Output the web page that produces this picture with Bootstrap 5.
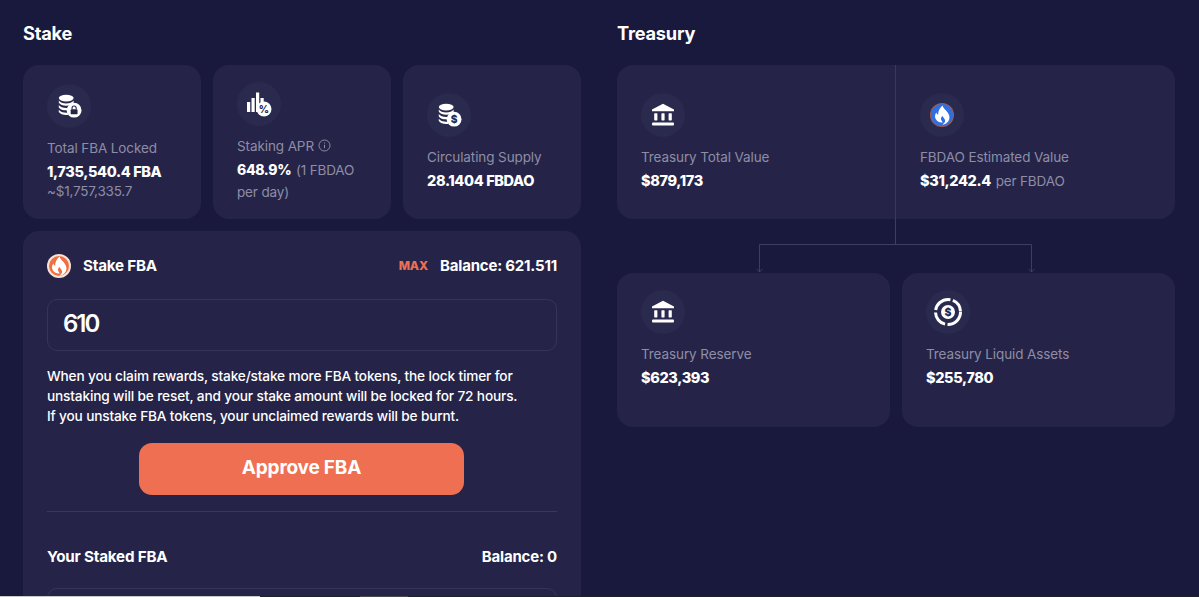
<!DOCTYPE html>
<html lang="en">
<head>
    <meta charset="UTF-8">
    <meta name="viewport" content="width=device-width, initial-scale=1.0">
    <title>Stake</title>
    <link href="https://cdn.jsdelivr.net/npm/bootstrap@5.3.0/dist/css/bootstrap.min.css" rel="stylesheet">
    <style>
        html, body { height: 100%; overflow: hidden; }
        body {
            background: #19183d;
            color: #fff;
            font-family: "Inter", "Liberation Sans", sans-serif;
            font-size: 13.5px;
        }
        .page-wrap { padding: 0 24px 0 23px; gap: 36px; }
        .side-col { width: 558px; flex: none; }
        .col-title { font-size: 18.2px; font-weight: 700; line-height: 22px; margin: 22px 0 21px; letter-spacing: -.2px; }
        .panel {
            background: #252448;
            border: 0;
            border-radius: 16px;
            color: #fff;
        }
        .stat-row { gap: 12px; }
        .stat-panel { height: 154px; padding: 0 24px; justify-content: center; }
        .stat-equal { flex: 1 1 0; min-width: 0; }
        .stat-low { justify-content: flex-start; padding-top: 17px; }
        .icon-disc {
            width: 44px; height: 44px; border-radius: 50%;
            background: #2a294e;
            margin-bottom: 10px;
        }
        .stat-label { color: #8e8da6; font-size: 13.5px; line-height: 20px; letter-spacing: -.1px; }
        .stat-value { font-size: 14.5px; font-weight: 800; line-height: 21px; margin-top: 3px; letter-spacing: -.35px; white-space: nowrap; }
        .stat-wrap { white-space: normal; font-size: 14px; }
        .stat-value .muted-part { font-weight: 400; letter-spacing: -.15px; font-size: 13.5px; margin-left: 2px; }
        .muted-part { color: #8e8da6; }
        .stat-note { color: #8e8da6; font-size: 13.5px; line-height: 18px; letter-spacing: -.2px; }
        .split-left { flex: 0 0 279px; border-right: 1px solid #3a3958; }
        .split-right { flex: 1 1 0; }
        .link-art { display: block; width: 558px; height: 54px; }
        .stake-panel { padding: 23px 24px 24px; margin-top: 12px; height: 500px; }
        .stake-head { font-size: 15.2px; font-weight: 700; line-height: 20px; letter-spacing: -.2px; }
        .head-balance { font-size: 15px; }
        .max-link { color: #ef6f52; font-weight: 800; font-size: 12px; letter-spacing: -.1px; }
        .amount-input.form-control {
            height: 52px;
            background: transparent;
            border: 1px solid #363557;
            border-radius: 10px;
            color: #fff;
            font-size: 24px;
            font-weight: 600;
            letter-spacing: -2px;
            padding: 0 15px 3px;
            box-shadow: none;
            margin-top: 21px;
        }
        .notice { font-size: 13.65px; line-height: 20px; font-weight: 500; margin: 15px 0 17px; letter-spacing: -.15px; white-space: nowrap; }
        .approve-btn.btn {
            display: block;
            width: 325px; height: 52px;
            margin: 0 0 0 92px;
            padding-bottom: 7px;
            background: #ef6f52;
            border: 0;
            border-radius: 13px;
            color: #fff;
            font-size: 19px;
            font-weight: 700;
            letter-spacing: -.2px;
        }
        .panel-rule { border: 0; border-top: 1px solid #3a3958; opacity: 1; margin: 16px 0 35px; }
        .flame-big { transform-origin: 12px 12px; transform: scale(1.12); }
        .taskbar-line { position: fixed; left: 0; right: 0; bottom: 0; height: 1px; background: #20202c; }
        .taskbar-line i { position: absolute; top: 0; height: 1px; display: block; }
        .bar-light { left: 0; width: 260px; background: #c9c9c9; }
        .bar-mid { left: 360px; width: 48px; background: #4a4a4a; }
    </style>
</head>
<body>
    <svg width="0" height="0" class="position-absolute">
        <symbol id="coins" viewBox="0 0 28 28">
            <ellipse cx="11" cy="5.500" rx="8" ry="3.600" fill="#fff"/>
            <path d="M3 8c1.400 2.200 4.500 3.200 8 3.200S17.600 10.200 19 8v2.500c-1.400 2.200-4.500 3.200-8 3.200s-6.600-1-8-3.200z" fill="#fff"/>
            <path d="M3 13c1.400 2.200 4.500 3.200 8 3.200h1.500l-.6 2.500H11c-3.500 0-6.600-1-8-3.200z" fill="#fff"/>
            <path d="M3 18c1.400 2.200 4.500 3.200 8 3.200h1.500l.8 2.500H11c-3.500 0-6.600-1-8-3.200z" fill="#fff"/>
            <circle cx="19.500" cy="18.500" r="8" fill="#fff"/>
        </symbol>
        <symbol id="bank" viewBox="0 0 24 24">
            <path d="M12 .8 23 6.500v1.800H1V6.500z" fill="#fff"/>
            <rect x="3.200" y="10.200" width="3.200" height="7.200" rx=".6" fill="#fff"/>
            <rect x="10.400" y="10.200" width="3.200" height="7.200" rx=".6" fill="#fff"/>
            <rect x="17.600" y="10.200" width="3.200" height="7.200" rx=".6" fill="#fff"/>
            <rect x="1" y="19.400" width="22" height="3" rx="1" fill="#fff"/>
        </symbol>
        <symbol id="flame" viewBox="0 0 24 24">
            <path d="M12.500 3.500c.6 2.300 2 3.300 3.500 5 1.800 2 2.900 4 2.600 6.300-.4 3-3 5.500-6.300 5.700 1.800-1 2.700-2.300 2.400-3.800-.2-1.300-1.300-2.300-2.300-3.800-.9 1-1.500 1.800-1.300 3 .2 1 .9 1.800 1.600 2.600-2 .6-4.500-.3-5.900-2.200-1.500-2.100-1.300-4.600.1-6.600.3 1 .9 1.700 1.700 2.100-.3-3.200 1.500-6.300 3.900-8.300z" fill="#fff"/>
        </symbol>
    </svg>

    <div class="page-wrap d-flex">
        <div class="side-col">
            <div class="col-title">Stake</div>
            <div class="d-flex stat-row">
                <div class="panel stat-panel stat-equal d-flex flex-column">
                    <div class="icon-disc d-flex align-items-center justify-content-center">
                        <svg width="26" height="26" viewBox="0 0 28 28">
                            <use href="#coins"/>
                            <rect x="15.800" y="17.500" width="7.400" height="5.500" rx="1" fill="#252448"/>
                            <path d="M17.300 17.500v-1.300a2.200 2.200 0 0 1 4.400 0v1.300" fill="none" stroke="#252448" stroke-width="1.200"/>
                        </svg>
                    </div>
                    <div class="stat-label">Total FBA Locked</div>
                    <div class="stat-value">1,735,540.4 FBA</div>
                    <div class="stat-note">~$1,757,335.7</div>
                </div>
                <div class="panel stat-panel stat-equal d-flex flex-column">
                    <div class="icon-disc d-flex align-items-center justify-content-center">
                        <svg width="26" height="26" viewBox="0 0 26 26">
                            <rect x="1" y="11" width="3.200" height="10" fill="#fff"/>
                            <rect x="5.500" y="7" width="3.200" height="14" fill="#fff"/>
                            <rect x="10" y="1.500" width="3.200" height="19.500" fill="#fff"/>
                            <rect x="14.500" y="7" width="3.200" height="8" fill="#fff"/>
                            <circle cx="18" cy="18" r="7.500" fill="#fff"/>
                            <text x="18" y="21.600" text-anchor="middle" font-size="10" font-weight="800" fill="#252448" font-family="Inter, sans-serif">%</text>
                        </svg>
                    </div>
                    <div class="stat-label d-flex align-items-center gap-1">Staking APR
                        <svg width="13" height="13" viewBox="0 0 13 13" fill="none"><circle cx="6.500" cy="6.500" r="5.500" stroke="#8e8da6"/><path d="M6.500 5.800v3.400M6.500 3.600v1" stroke="#8e8da6"/></svg>
                    </div>
                    <div class="stat-value stat-wrap">648.9% <span class="muted-part">(1 FBDAO per day)</span></div>
                </div>
                <div class="panel stat-panel stat-equal d-flex flex-column">
                    <div class="icon-disc d-flex align-items-center justify-content-center">
                        <svg width="26" height="26" viewBox="0 0 28 28">
                            <use href="#coins"/>
                            <text x="19.500" y="22.500" text-anchor="middle" font-size="11" font-weight="800" fill="#252448" font-family="Inter, sans-serif">$</text>
                        </svg>
                    </div>
                    <div class="stat-label">Circulating Supply</div>
                    <div class="stat-value">28.1404 FBDAO</div>
                </div>
            </div>

            <div class="panel stake-panel">
                <div class="stake-head d-flex align-items-center justify-content-between">
                    <div class="d-flex align-items-center">
                        <svg width="24" height="24" viewBox="0 0 24 24" class="me-2">
                            <circle cx="12" cy="12" r="12" fill="#f6e3d8"/>
                            <circle cx="12" cy="12" r="10" fill="#ef6f3f"/>
                            <use href="#flame" class="flame-big"/>
                        </svg>
                        <span class="ms-1">Stake FBA</span>
                    </div>
                    <div class="d-flex align-items-center">
                        <span class="max-link me-2">MAX</span>
                        <span class="ms-1 head-balance">Balance: 621.511</span>
                    </div>
                </div>
                <input class="form-control amount-input" type="text" value="610">
                <p class="notice">When you claim rewards, stake/stake more FBA tokens, the lock timer for<br>unstaking will be reset, and your stake amount will be locked for 72 hours.<br>If you unstake FBA tokens, your unclaimed rewards will be burnt.</p>
                <button class="btn approve-btn" type="button">Approve FBA</button>
                <hr class="panel-rule">
                <div class="stake-head d-flex justify-content-between">
                    <span>Your Staked FBA</span>
                    <span class="head-balance">Balance: 0</span>
                </div>
                <input class="form-control amount-input" type="text" value="">
            </div>
        </div>

        <div class="side-col">
            <div class="col-title">Treasury</div>
            <div class="panel d-flex">
                <div class="stat-panel split-left d-flex flex-column">
                    <div class="icon-disc d-flex align-items-center justify-content-center">
                        <svg width="24" height="24"><use href="#bank"/></svg>
                    </div>
                    <div class="stat-label">Treasury Total Value</div>
                    <div class="stat-value">$879,173</div>
                </div>
                <div class="stat-panel split-right d-flex flex-column">
                    <div class="icon-disc d-flex align-items-center justify-content-center">
                        <svg width="24" height="24" viewBox="0 0 24 24">
                            <circle cx="12" cy="12" r="12" fill="#a5594f"/>
                            <circle cx="12" cy="12" r="11" fill="#2f6fe0"/>
                            <use href="#flame" class="flame-big"/>
                        </svg>
                    </div>
                    <div class="stat-label">FBDAO Estimated Value</div>
                    <div class="stat-value">$31,242.4 <span class="muted-part">per FBDAO</span></div>
                </div>
            </div>
            <svg class="link-art" viewBox="0 0 558 54" fill="none" stroke="#3f3e5c">
                <path d="M278.500 0v25.500M142.500 53V25.500h272V53M139.500 50l3 3 3-3M411.500 50l3 3 3-3"/>
            </svg>
            <div class="d-flex stat-row">
                <div class="panel stat-panel stat-low stat-equal d-flex flex-column">
                    <div class="icon-disc d-flex align-items-center justify-content-center">
                        <svg width="24" height="24"><use href="#bank"/></svg>
                    </div>
                    <div class="stat-label">Treasury Reserve</div>
                    <div class="stat-value">$623,393</div>
                </div>
                <div class="panel stat-panel stat-low stat-equal d-flex flex-column">
                    <div class="icon-disc d-flex align-items-center justify-content-center">
                        <svg width="30" height="30" viewBox="0 0 30 30" fill="none">
                            <circle cx="15" cy="15" r="12.500" stroke="#fff" stroke-width="3" stroke-dasharray="20 2.500 16 2.500 20 2.500 14 2.500"/>
                            <circle cx="15" cy="15" r="7" fill="#fff"/>
                            <text x="15" y="19" text-anchor="middle" font-size="10.500" font-weight="800" fill="#252448" font-family="Inter, sans-serif">$</text>
                        </svg>
                    </div>
                    <div class="stat-label">Treasury Liquid Assets</div>
                    <div class="stat-value">$255,780</div>
                </div>
            </div>
        </div>
    </div>

    <div class="taskbar-line">
        <i class="bar-light"></i>
        <i class="bar-mid"></i>
    </div>

    <script src="https://cdn.jsdelivr.net/npm/bootstrap@5.3.0/dist/js/bootstrap.bundle.min.js"></script>
</body>
</html>
